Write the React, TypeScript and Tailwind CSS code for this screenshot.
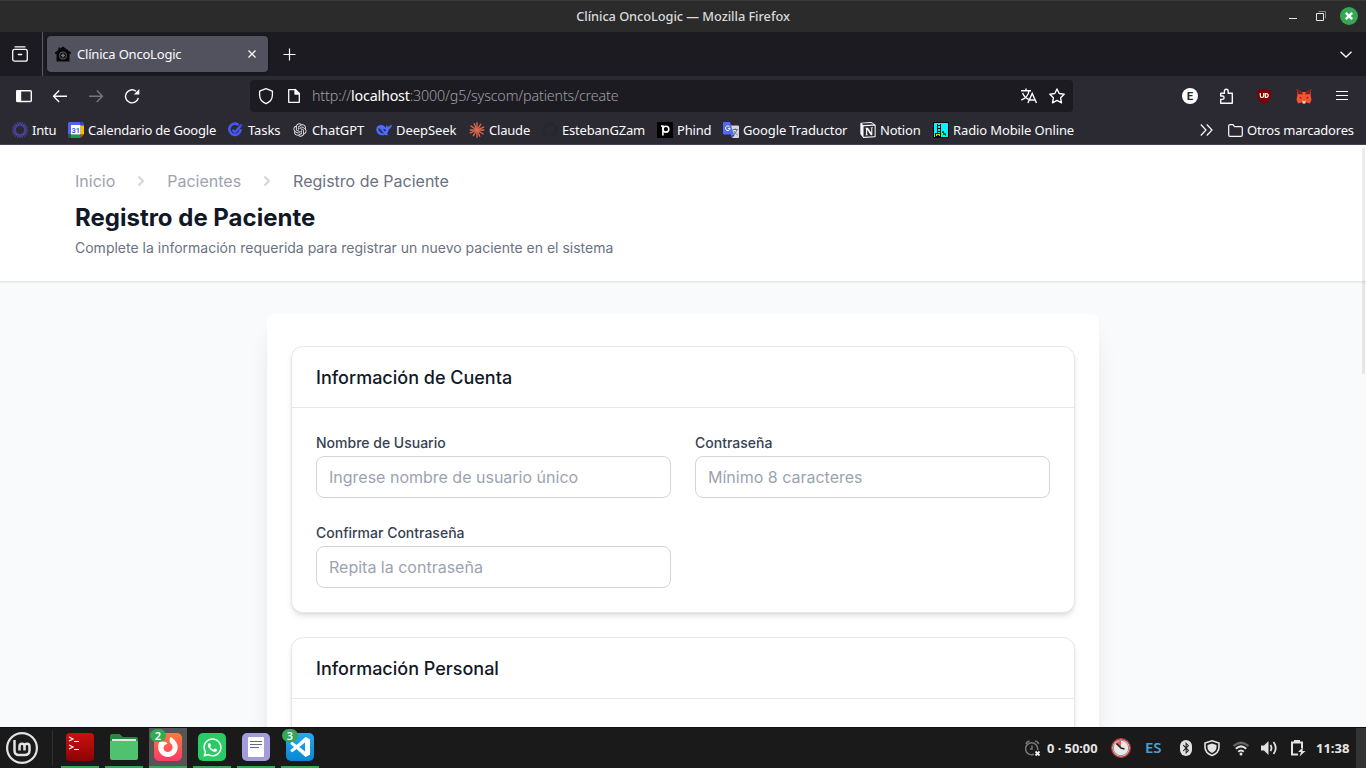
import React from 'react';
import { FaWhatsapp, FaGithub, FaBluetoothB } from 'react-icons/fa';
import { SiNotion } from 'react-icons/si';
import { RiOpenaiFill } from 'react-icons/ri';

const rays = (n: number) => Array.from({ length: n }, (_, i) => (i * 360) / n);

function IntuIcon() {
  return (
    <svg width="16" height="16" viewBox="0 0 16 16">
      {rays(20).map((a) => (
        <line key={a} x1="8" y1="0" x2="8" y2="3.8" stroke="#4f4ab4" strokeWidth="1.150" transform={`rotate(${a} 8 8)`} />
      ))}
      <circle cx="8" cy="8" r="5" fill="none" stroke="#4a46a8" strokeWidth="0.700" />
    </svg>
  );
}

function CalendarIcon() {
  return (
    <svg width="16" height="16" viewBox="0 0 16 16">
      <path d="M1.500 0H12.500V3H3V12.500H0V1.500Q0 0 1.500 0Z" fill="#5064f4" />
      <path d="M12.500 0H14.500Q16 0 16 1.500V3.500H12.500Z" fill="#3a44c8" />
      <path d="M12.500 3.500H16V12.500H12.500Z" fill="#f8c200" />
      <path d="M3 12.500H12.500V16H3Z" fill="#12a050" />
      <path d="M0 12.500H3V16H1.500Q0 16 0 14.500Z" fill="#0c7038" />
      <path d="M12.500 12.500H16L12.500 16Z" fill="#e8402c" />
      <path d="M3 3H12.500V12.500H3Z" fill="#fff" />
      <text x="7.800" y="10.700" fontSize="7.500" fontWeight="700" textAnchor="middle" fill="#4a5af0" fontFamily="Roboto, sans-serif">31</text>
    </svg>
  );
}

function TasksIcon() {
  return (
    <svg width="16" height="16" viewBox="0 0 16 16" fill="none">
      <path d="M10.500 2.900A5.600 5.600 0 1 0 12.600 7.200" stroke="#4858f6" strokeWidth="2.600" />
      <path d="M4.400 7.700L6.900 10.200L13 3.600" stroke="#4858f6" strokeWidth="2.300" />
      <circle cx="12.900" cy="3.200" r="1.500" fill="#3840d0" />
    </svg>
  );
}

function DeepSeekIcon() {
  return (
    <svg width="16" height="16" viewBox="0 0 16 16">
      <path d="M0.300 7C0.600 4.200 3 2.600 6 3C8 3.400 8.700 5 10 6.100C10.300 5.600 9.600 4.600 10 3C10.800 4.200 11.700 4.700 12.900 4.400C13.900 4 14.500 3.200 15.800 2.600C15.800 5 14.800 6.800 12.900 7.300C12.700 9.200 11.900 10.600 10.800 11.600L12.200 12.700C10.900 13.500 9.500 13.200 8.500 12.700C4.500 14.500 0 11.500 0.300 7Z" fill="#4d6bfe" />
      <path d="M2.300 6.300C3.700 6 4.800 7.200 6 9C6.600 10.300 7.400 11 8.300 11.300C4.800 11.900 2.400 9.500 2.300 6.300Z" fill="#2b2a33" opacity="0.850" />
      <path d="M7.300 7.200C8.800 6.600 9.900 7.600 9.800 9.200C9 9.600 7.800 9 7.300 7.200Z" fill="#2b2a33" />
    </svg>
  );
}

function ClaudeIcon() {
  return (
    <svg width="16" height="16" viewBox="0 0 16 16" stroke="#e2684c" strokeWidth="1.350" strokeLinecap="round">
      {rays(12).map((a, i) => (
        <line key={a} x1="8" y1="8" x2="8" y2={i % 2 ? 1.2 : 0.7} transform={`rotate(${a + (i % 3) * 3} 8 8)`} />
      ))}
    </svg>
  );
}

function PhindIcon() {
  return (
    <span className="flex h-4 w-4 items-center justify-center bg-black">
      <svg width="9" height="11" viewBox="0 0 9 11" fill="none" stroke="#fff" strokeWidth="1.600">
        <path d="M0 1H1.900V10.500" />
        <circle cx="4.900" cy="4.200" r="2.900" />
      </svg>
    </span>
  );
}

function TranslateLogo() {
  return (
    <svg width="16" height="16" viewBox="0 0 16 16">
      <path d="M6 3.500H15Q16 3.500 16 4.500V15Q16 16 15 16H9Z" fill="#d5d7dc" />
      <path d="M8 12.500L9.200 16L12.200 12.500Z" fill="#3948c8" />
      <path d="M9.800 7.500H15M12.200 6.300V7.500M13.900 7.500C13.300 10 12 11.700 10.300 12.600M11 9.200C11.700 10.800 13 12 14.600 13" fill="none" stroke="#6b7180" strokeWidth="1" />
      <path d="M1 0H6.900L11 12.500H1Q0 12.500 0 11.500V1Q0 0 1 0Z" fill="#5468f0" />
      <path d="M6.600 4.800A2.300 2.300 0 1 0 7.100 6.400H4.900" fill="none" stroke="#fff" strokeWidth="1" />
    </svg>
  );
}

function RadioIcon() {
  return (
    <svg width="16" height="16" viewBox="0 0 16 16" shapeRendering="crispEdges">
      <path d="M0 0H16V16H0Z" fill="#000" />
      <path d="M1 1H15V15H1Z" fill="#00f6fa" />
      <path d="M4 2H5V12H4ZM7 2H8V12H7ZM5 3H7V4H5ZM5 6H7V7H5ZM5 9H7V10H5Z" fill="#000" />
      <path d="M2 11H8V15H2Z" fill="#000" />
      <path d="M3 12H7V14H3Z" fill="#e0e000" />
      <path d="M4 13H6V14H4Z" fill="#000" />
      <path d="M9 9H11V11H13V14H12V13H10V11H9Z" fill="#087008" />
    </svg>
  );
}

type Mark = { label: string; box: string; text: string; icon: React.ReactNode };
const marks: Mark[] = [
  { label: 'Intu', box: 'w-[56px]', text: 'tracking-[-0.200px]', icon: <IntuIcon /> },
  { label: 'Calendario de Google', box: 'w-[160px]', text: 'tracking-[-0.200px]', icon: <CalendarIcon /> },
  { label: 'Tasks', box: 'w-[64px]', text: 'tracking-[-0.100px]', icon: <TasksIcon /> },
  { label: 'ChatGPT', box: 'w-[84px]', text: 'tracking-[-0.100px]', icon: <RiOpenaiFill size={16} color="#e6e6ea" /> },
  { label: 'DeepSeek', box: 'w-[93px]', text: 'tracking-[-0.050px]', icon: <DeepSeekIcon /> },
  { label: 'Claude', box: 'w-[73px]', text: 'tracking-[-0.200px]', icon: <ClaudeIcon /> },
  { label: 'EstebanGZam', box: 'w-[115px]', text: 'tracking-[-0.200px]', icon: <FaGithub size={16} color="#24292e" /> },
  { label: 'Phind', box: 'w-[66px]', text: 'tracking-[-0.200px]', icon: <PhindIcon /> },
  { label: 'Google Traductor', box: 'w-[137px]', text: 'tracking-[-0.130px]', icon: <TranslateLogo /> },
  { label: 'Notion', box: 'w-[73px]', text: 'tracking-[-0.200px]', icon: <SiNotion size={16} color="#f5f5f5" /> },
  { label: 'Radio Mobile Online', box: 'w-[160px]', text: 'tracking-[-0.120px]', icon: <RadioIcon /> },
];

function TitleBar() {
  return (
    <div className="flex h-8 shrink-0 border-t border-[#3a3a3a] bg-[#2b2b2b]">
      <div className="w-[150px]" />
      <div className="flex-1 pt-[5px] text-center text-[12.800px] leading-5 font-medium tracking-[-0.060px] text-[#dadada]">Clínica OncoLogic — Mozilla Firefox</div>
      <div className="w-[150px]">
        <svg width="150" height="31" viewBox="1216 1 150 31" fill="none">
          <path d="M1289 18.500H1297" stroke="#e4e4e4" />
          <path d="M1318.500 11.500H1325.500V18.500" stroke="#858585" />
          <path d="M1316.500 13.500H1323.500V20.500H1316.500Z" stroke="#e8e8e8" />
          <circle cx="1349" cy="16" r="9" fill="#35a854" />
          <path d="M1345.800 12.800L1352.200 19.200M1352.200 12.800L1345.800 19.200" stroke="#fff" strokeWidth="2.400" />
        </svg>
      </div>
    </div>
  );
}

function TabBar() {
  return (
    <div className="flex h-11 shrink-0 items-center bg-[#1c1b22] text-[#fbfbfe]">
      <div className="flex h-11 w-[43px] items-center border-r border-[#5b5b66] pl-3">
        <svg width="16" height="16" viewBox="0 0 16 16" fill="none" stroke="#fbfbfe" strokeWidth="1.300" strokeLinecap="round">
          <path d="M3 0.800H13" />
          <rect x="0.700" y="3.400" width="14.600" height="11.800" rx="2" />
          <path d="M6.300 8.500H9.700" />
        </svg>
      </div>
      <div className="ml-1 flex h-9 w-[221px] items-center rounded bg-[#52525e] pl-2 shadow-[0_0_3px_rgba(0,0,0,0.500)]">
        <svg width="16" height="16" viewBox="0 0 16 16">
          <path d="M8 0.400L16 6.500V7.700H14.500V15.600H1.500V7.700H0V6.500L3.500 3.800V1.500H5V2.700Z" fill="#08080a" />
          <circle cx="8" cy="9.500" r="3.600" fill="none" stroke="#5c5c68" strokeWidth="1" />
          <path d="M8 7.600V11.400M6.100 9.500H9.900" stroke="#7c7c88" strokeWidth="1.300" />
        </svg>
        <span className="ml-[6px] flex-1 pt-[2px] text-[13px] whitespace-nowrap tracking-[-0.200px]">Clínica OncoLogic</span>
        <svg className="mr-3" width="8" height="8" viewBox="0 0 8 8" stroke="#fbfbfe" strokeWidth="1.300"><path d="M0.500 0.500L7.500 7.500M7.500 0.500L0.500 7.500" /></svg>
      </div>
      <svg className="ml-[15px]" width="13" height="13" viewBox="0 0 13 13" stroke="#fbfbfe" strokeWidth="1.200"><path d="M6.500 0.500V12.500M0.500 6.500H12.500" /></svg>
      <svg className="mr-[14px] ml-auto" width="12" height="7" viewBox="0 0 12 7" fill="none" stroke="#fbfbfe" strokeWidth="1.300"><path d="M0.500 0.700L6 6L11.500 0.700" /></svg>
    </div>
  );
}

function NavBar() {
  return (
    <div className="flex h-[38px] shrink-0 items-center bg-[#2b2a33] pt-[2px]">
      <svg className="shrink-0" width="250" height="36" viewBox="0 78 250 36" fill="none" stroke="#fbfbfe" strokeWidth="1.400">
        <rect x="16.700" y="90.700" width="14.600" height="10.800" rx="1" />
        <path d="M17 91H20.500V101H17Z" fill="#fbfbfe" />
        <path d="M67 96.200H53.500M59.200 90.500L53.500 96.200L59.200 101.900" strokeLinejoin="round" />
        <path d="M89 96.200H102.500M96.800 90.500L102.500 96.200L96.800 101.900" stroke="#77767f" strokeLinejoin="round" />
        <path d="M138.300 98A6.500 6.500 0 1 1 136 91.200" />
        <path d="M139.300 89V94.500H133.800Z" fill="#fbfbfe" stroke="none" />
      </svg>
      <div className="flex h-8 w-[823px] shrink-0 items-center rounded bg-[#1c1b22]">
        <svg className="shrink-0" width="62" height="32" viewBox="250 80 62 32" fill="none" stroke="#fbfbfe" strokeWidth="1.300" strokeLinejoin="round">
          <path d="M266 88.700L272.400 91.200V95C272.400 99 270 102 266 103.600C262 102 259.600 99 259.600 95V91.200Z" />
          <path d="M288.700 89.700H295.500L299.300 93.500V102.300H288.700Z" />
          <path d="M295 89.500V94H299.500Z" fill="#fbfbfe" />
        </svg>
        <span className="flex-1 text-[14.300px] font-light whitespace-nowrap tracking-[-0.160px] text-[#a09fa8]">
          http://<span className="tracking-[-0.200px] text-white [font-weight:370]">localhost</span>:3000/g5/syscom/patients/create
        </span>
        <svg className="shrink-0" width="60" height="32" viewBox="1013 80 60 32" fill="none" stroke="#fbfbfe" strokeWidth="1.400">
          <path d="M1021 90.700H1031M1026 88.500V90.500M1022.600 93C1024 96.500 1027 99 1030 99.600M1029 91C1028.300 95 1025 98.700 1021.300 100" />
          <path d="M1027.900 103L1032.200 93.500L1036.500 103M1029.500 100H1035" />
          <path d="M1057 89L1059.200 93.500L1064.200 94.300L1060.600 97.800L1061.500 102.800L1057 100.400L1052.500 102.800L1053.400 97.800L1049.800 94.300L1054.800 93.500Z" strokeLinejoin="round" />
        </svg>
      </div>
      <svg className="shrink-0" width="293" height="36" viewBox="1073 78 293 36">
        <circle cx="1190" cy="96" r="8" fill="#fff" />
        <text x="1190" y="100" fontSize="11.500" fontWeight="700" textAnchor="middle" fill="#2b2a33" fontFamily="Roboto, sans-serif">E</text>
        <path d="M1220.700 99.500V103.300H1232.300V93.200H1228.200V91.200A1.900 1.900 0 0 0 1224.400 91.200V93.200H1220.700V96H1222.400A1.700 1.700 0 0 1 1222.400 99.400H1220" fill="none" stroke="#fbfbfe" strokeWidth="1.400" strokeLinejoin="round" />
        <path d="M1264 88.200C1266 89.800 1268.500 90.200 1270.800 90.200V95C1270.800 99.500 1268 102.300 1264 104C1260 102.300 1257.200 99.500 1257.200 95V90.200C1259.500 90.200 1262 89.800 1264 88.200Z" fill="#800000" />
        <path d="M1260.300 93V95.800Q1260.300 97.500 1262 97.500T1263.700 95.800V93M1265.300 93.500V97.500C1269.200 97.700 1269.200 93.200 1265.300 93.500Z" fill="none" stroke="#fff" strokeWidth="1.200" />
        <path d="M1296.700 89L1302 92H1306L1311.300 89L1310.500 95L1311.500 99.500L1310 103.500L1306 102.300L1304.700 103.700H1303.300L1302 102.300L1298 103.500L1296.500 99.500L1297.500 95Z" fill="#f5562f" />
        <path d="M1296.700 89L1302 92L1303 94.500L1298 94ZM1311.300 89L1306 92L1305 94.500L1310 94Z" fill="#7b1f1c" />
        <path d="M1299.500 96.700L1302.500 98.300L1300 98.600ZM1308.500 96.700L1305.500 98.300L1308 98.600Z" fill="#5a2020" />
        <path d="M1302.200 101H1305.800L1305.300 103.500H1302.700Z" fill="#d8c8c0" />
        <path d="M1336 91.500H1348M1336 95.500H1348M1336 99.500H1348" stroke="#fbfbfe" strokeWidth="1.200" />
      </svg>
    </div>
  );
}

function Bookmarks() {
  return (
    <div className="flex h-[31px] shrink-0 items-center border-b border-[#46454e] bg-[#2b2a33] pt-[2px] pl-3 text-[13px] text-[#fbfbfe]">
      {marks.map((m) => (
        <div key={m.label} className={`flex shrink-0 items-center gap-1 ${m.box}`}>
          <span className="flex h-4 w-4 shrink-0 items-center">{m.icon}</span>
          <span className={`pt-px whitespace-nowrap ${m.text}`}>{m.label}</span>
        </div>
      ))}
      <div className="mr-3 ml-auto flex shrink-0 items-center">
        <svg width="13" height="12" viewBox="0 0 13 12" fill="none" stroke="#fbfbfe" strokeWidth="1.200"><path d="M0.800 0.500L6 6L0.800 11.500M6.800 0.500L12 6L6.800 11.500" /></svg>
        <svg className="mr-1 ml-[15px]" width="15" height="13" viewBox="0 0 15 13" fill="none" stroke="#fbfbfe" strokeWidth="1.200"><path d="M0.700 11V2Q0.700 0.700 2 0.700H5L6.500 2.700H13Q14.300 2.700 14.300 4V11Q14.300 12.300 13 12.300H2Q0.700 12.300 0.700 11Z" /></svg>
        <span className="w-[107px] pt-px whitespace-nowrap tracking-[-0.200px]">Otros marcadores</span>
      </div>
    </div>
  );
}

function Crumb() {
  return (
    <svg className="h-5 w-5" viewBox="0 0 20 20" fill="#d1d5db">
      <path fillRule="evenodd" d="M7.290 14.710a1 1 0 010-1.420L10.590 10 7.290 6.710a1 1 0 011.420-1.420l4 4a1 1 0 010 1.420l-4 4a1 1 0 01-1.420 0z" clipRule="evenodd" />
    </svg>
  );
}

function Field({ label, placeholder }: { label: string; placeholder: string }) {
  return (
    <label className="block">
      <span className="block pt-px text-sm font-medium text-[#374151]">{label}</span>
      <input className="mt-[3px] block h-[42px] w-full rounded-lg border border-[#d1d5db] bg-white px-3 text-base placeholder:text-[#9ca3af]" placeholder={placeholder} />
    </label>
  );
}

function Section({ title, children }: { title: string; children?: React.ReactNode }) {
  return (
    <section className="rounded-xl border border-[#e5e7eb] bg-white shadow-md">
      <h2 className="border-b border-[#e5e7eb] px-6 pt-[17px] pb-[15px] text-lg font-medium text-[#111827]">{title}</h2>
      <div className="grid min-h-[120px] grid-cols-2 gap-6 p-6">{children}</div>
    </section>
  );
}

function PageView() {
  return (
    <div className="relative h-[582px] shrink-0 overflow-hidden bg-[#f9fafb] font-[Inter,sans-serif]">
      <header className="border-b border-[#e5e7eb] bg-white shadow-[0_1px_2px_rgba(0,0,0,0.050)]">
        <div className="mx-auto max-w-7xl px-8 pt-6 pb-[23px]">
          <nav className="flex items-center gap-4 text-base text-[#9ca3af]">
            <span>Inicio</span>
            <Crumb />
            <span>Pacientes</span>
            <Crumb />
            <span className="text-[#6b7280]">Registro de Paciente</span>
          </nav>
          <h1 className="mt-[9px] text-2xl font-bold text-[#111827]">Registro de Paciente</h1>
          <p className="mt-1 text-sm text-[#6b7280]">Complete la información requerida para registrar un nuevo paciente en el sistema</p>
        </div>
      </header>
      <main className="mx-auto mt-8 w-[832px] rounded-lg bg-white px-6 py-8 shadow-xl">
        <div className="flex flex-col gap-6">
          <Section title="Información de Cuenta">
            <Field label="Nombre de Usuario" placeholder="Ingrese nombre de usuario único" />
            <Field label="Contraseña" placeholder="Mínimo 8 caracteres" />
            <Field label="Confirmar Contraseña" placeholder="Repita la contraseña" />
          </Section>
          <Section title="Información Personal" />
        </div>
      </main>
      <div className="absolute top-[2px] right-px h-[227px] w-[3px] rounded-full bg-black/8" />
    </div>
  );
}

function AppSlot({ children, active, badge }: { children: React.ReactNode; active?: boolean; badge?: string }) {
  return (
    <div className={`relative flex h-10 w-[38px] items-center justify-center border-b-2 border-[#35a854] ${active ? 'bg-[#555555]' : ''}`}>
      {children}
      {badge && <span className="absolute top-[1px] left-[1px] flex h-[13px] w-4 items-center justify-center rounded-full bg-[#35a854] text-[11px] leading-none font-semibold text-white">{badge}</span>}
    </div>
  );
}

function Taskbar() {
  return (
    <div className="flex h-[41px] shrink-0 items-center border-t border-[#111111] bg-[#1a1a1a] text-[#e6e6e6]">
      <svg className="ml-[6px] shrink-0" width="32" height="32" viewBox="0 0 32 32" fill="none" stroke="#e2e2e2">
        <circle cx="16" cy="16" r="14.900" strokeWidth="2.200" />
        <path d="M8.500 8V18.500Q8.500 23 13 23H18.500Q23.500 23 23.500 18.500V14.500Q23.500 11.800 21 11.800T18.500 14.500V18.500M18.500 14.500Q18.500 11.800 16 11.800T13.500 14.500V18.500" strokeWidth="2.500" />
      </svg>
      <div className="ml-[14px] h-9 w-px bg-[#303030]" />
      <div className="ml-2 flex gap-[6px]">
        <AppSlot>
          <svg width="28" height="28" viewBox="0 0 28 28">
            <defs><linearGradient id="term" x2="0" y2="1"><stop stopColor="#cc1010" /><stop offset="1" stopColor="#8c0404" /></linearGradient></defs>
            <rect width="28" height="28" rx="4" fill="url(#term)" />
            <path d="M3 4L7 6L3 8M3 12L7 14L3 16M8 8.500H13M8 16.500H13" fill="none" stroke="#fff" strokeWidth="1.100" />
          </svg>
        </AppSlot>
        <AppSlot>
          <svg width="28" height="26" viewBox="0 0 28 26">
            <path d="M0 2Q0 0 2 0H9.500L13 3H26Q28 3 28 5V10H0Z" fill="#25883f" />
            <path d="M2 5H26V12H2Z" fill="#e8e8e8" />
            <path d="M0 7H28V24Q28 26 26 26H2Q0 26 0 24Z" fill="#50c16e" />
          </svg>
        </AppSlot>
        <AppSlot active badge="2">
          <svg width="28" height="28" viewBox="0 0 28 28">
            <defs><linearGradient id="fox" x2="0" y2="1"><stop stopColor="#ff7a3c" /><stop offset="1" stopColor="#fb3a66" /></linearGradient></defs>
            <rect width="28" height="28" rx="5" fill="url(#fox)" />
            <path d="M5.500 8.500L7.500 7L9 9C10.500 8.500 12.500 9 13.500 10.500L10.500 12.300C9 14 9.300 17 11.200 18.300C13.500 19.700 17 19 18.300 16C19.200 13.500 18 11.500 16.500 10.300C15.300 8.500 15.300 6 16.500 4C18.300 5 20.500 6.500 22.300 9.500C24.500 13 24 17.500 21.500 20.500C17.500 25 10 25 6.500 20.500C3.700 17 3.500 12 5.500 8.500Z" fill="#fff" />
          </svg>
        </AppSlot>
        <AppSlot>
          <span className="flex h-7 w-7 items-center justify-center rounded-[5px] bg-[#29cb65]"><FaWhatsapp size={21} color="#fff" /></span>
        </AppSlot>
        <AppSlot>
          <svg width="28" height="28" viewBox="0 0 28 28">
            <rect width="28" height="28" rx="5" fill="#a29dda" />
            <rect x="6" y="4" width="16" height="20" rx="1" fill="#fff" />
            <path d="M8 8.500H20M8 11.500H20M8 14.500H17" stroke="#68658c" strokeWidth="1.100" />
          </svg>
        </AppSlot>
        <AppSlot badge="3">
          <svg width="28" height="28" viewBox="0 0 28 28">
            <defs><linearGradient id="code" x2="0" y2="1"><stop stopColor="#25a9ee" /><stop offset="1" stopColor="#0b86d4" /></linearGradient></defs>
            <rect width="28" height="28" rx="5" fill="url(#code)" />
            <path fillRule="evenodd" d="M19.500 4L24 6.200V21.800L19.500 24L10.500 16L6.300 19.300L4.500 18V17L8 14L4.500 11V10L6.300 8.700L10.500 12ZM19 9.500L13.300 14L19 18.500Z" fill="#fff" />
          </svg>
        </AppSlot>
      </div>
      <div className="ml-auto flex h-10 items-center text-[12.800px] font-bold">
        <svg className="mr-[6px]" width="16" height="17" viewBox="0 0 16 17" fill="none" stroke="#777" strokeWidth="1.500">
          <path d="M12.500 10A6 6 0 1 0 9 14.300M1 4Q1.500 1.500 4.500 1M10 1Q13 1.500 13.700 4M7 5.500V9H5" />
          <path d="M10.500 11.500L14.500 15.500M14.500 11.500L10.500 15.500" stroke="#f0f0f0" strokeWidth="1.800" />
        </svg>
        <span className="w-[64px] pt-px whitespace-nowrap">0 · 50:00</span>
        <svg width="20" height="20" viewBox="0 0 20 20">
          <circle cx="10" cy="10" r="9.300" fill="#e8e8e8" stroke="#c83232" strokeWidth="1.400" />
          <circle cx="10" cy="10" r="7.700" fill="none" stroke="#8c8c8c" />
          <path d="M10 10L4.500 6Q6.500 3 10 2.500Z" fill="#f05a5a" />
          <path d="M5.500 5.500L10 10L13.500 11" fill="none" stroke="#222" strokeWidth="1.500" />
        </svg>
        <span className="ml-[14px] w-[35px] pb-px text-[15px] font-semibold text-[#4a9fd0]">ES</span>
        <span className="flex h-4 w-[12px] items-center justify-center rounded-full bg-[#e2e2e2]"><FaBluetoothB size={12} color="#1a1a1a" /></span>
        <svg className="shrink-0" width="114" height="40" viewBox="1192 728 114 40" fill="none" stroke="#e2e2e2">
          <path d="M1212 740.800L1219 743V747C1219 751 1216 754 1212 755.500C1208 754 1205 751 1205 747V743Z" strokeWidth="1.600" />
          <path d="M1212 743.500L1216.500 745V747.500C1216.500 750 1214.500 752 1212 753C1209.500 752 1207.500 750 1207.500 747.500V745Z" fill="#e2e2e2" stroke="none" />
          <path d="M1233.500 746Q1241 739.500 1248.500 746" stroke="#666" strokeWidth="2.200" />
          <path d="M1235.800 748.800Q1241 744 1246.200 748.800M1238.200 751.700Q1241 749.200 1243.800 751.700" strokeWidth="2" />
          <circle cx="1241" cy="754" r="1.500" fill="#e2e2e2" stroke="none" />
          <path d="M1261 745.500H1264L1268.500 741V755L1264 750.500H1261Z" fill="#e2e2e2" stroke="none" />
          <path d="M1270.500 745Q1272.500 748 1270.500 751M1273.500 742Q1278 748 1273.500 754" strokeWidth="1.800" />
          <path d="M1298 754.500H1292V742.500H1302V748" strokeWidth="2" />
          <path d="M1294 740H1300V742H1294Z" fill="#e2e2e2" stroke="none" />
          <path d="M1303 747L1298 752H1301L1299.500 756.500L1305.500 751H1302.500Z" fill="#e2e2e2" stroke="none" />
        </svg>
        <span className="ml-[10px] w-10 pt-px text-[13px]">11:38</span>
        <div className="h-10 w-[10px] bg-[#333333]" />
      </div>
    </div>
  );
}

export default function App() {
  return (
    <div className="flex h-[768px] w-[1366px] flex-col overflow-hidden font-['Noto_Sans',sans-serif]">
      <TitleBar />
      <TabBar />
      <NavBar />
      <Bookmarks />
      <PageView />
      <Taskbar />
    </div>
  );
}
